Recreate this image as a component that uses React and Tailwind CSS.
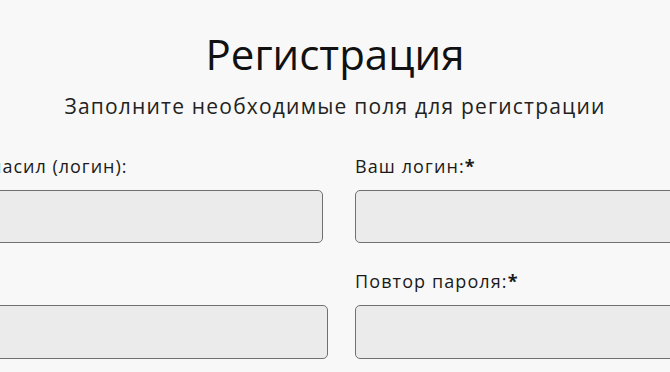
export default function App() {
  const font = { fontFamily: '"Open Sans", "Noto Sans", sans-serif' };
  return (
    <div
      className="w-[670px] h-[372px] overflow-hidden bg-[#f8f8f8] text-[#1a1a1a]"
      style={font}
    >
      <h1 className="pt-[33px] text-center text-[42px] leading-none font-normal text-[#111]">
        Регистрация
      </h1>
      <p className="mt-[21px] text-center text-[21px] leading-none tracking-[1.2px] text-[#222]">
        Заполните необходимые поля для регистрации
      </p>

      <div className="mt-[40px] flex">
        {/* left column, partly cut off */}
        <div className="ml-[-40px] w-[368px] shrink-0">
          <div className="pl-[30px] text-[18px] leading-none tracking-[1px] h-[18px] whitespace-nowrap">
            насил (логин):
          </div>
          <div className="mt-[15px] w-[363px] h-[53px] rounded-[5px] border border-[#707070] bg-[#ebebeb]" />
          <div className="h-[18px] mt-[29px]" />
          <div className="mt-[15px] w-[368px] h-[54px] rounded-[5px] border border-[#707070] bg-[#ebebeb]" />
        </div>

        {/* right column */}
        <div className="ml-[27px] w-[360px] shrink-0">
          <div className="text-[18px] leading-none tracking-[1.1px] h-[18px] whitespace-nowrap">
            Ваш логин:<span className="font-bold">*</span>
          </div>
          <div className="mt-[15px] h-[53px] rounded-[5px] border border-[#707070] bg-[#ebebeb]" />
          <div className="mt-[29px] text-[18px] leading-none tracking-[1.1px] h-[18px] whitespace-nowrap">
            Повтор пароля:<span className="font-bold">*</span>
          </div>
          <div className="mt-[15px] h-[54px] rounded-[5px] border border-[#707070] bg-[#ebebeb]" />
        </div>
      </div>
    </div>
  );
}
